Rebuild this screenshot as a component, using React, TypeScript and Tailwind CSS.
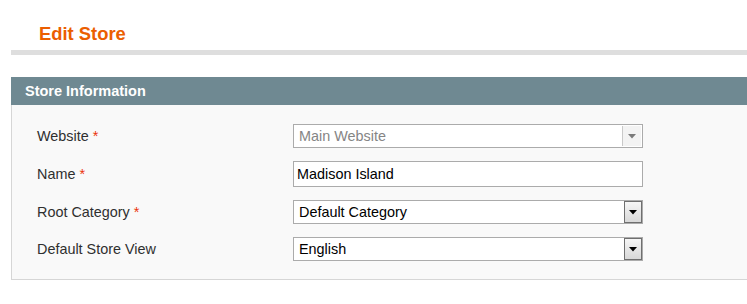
import React from "react";

const font = { fontFamily: '"Liberation Sans", Arial, sans-serif' };

function Arrow({ color }: { color: string }) {
  return (
    <svg width="8" height="5" viewBox="0 0 8 5" className="block">
      <polygon points="0,0 8,0 4,4.5" fill={color} />
    </svg>
  );
}

function Select({ value, disabled }: { value: string; disabled?: boolean }) {
  return (
    <div className="relative flex h-[24px] w-[350px] items-center border border-[#ababab] bg-white pl-[5px] pt-[2px]">
      <span className={disabled ? "text-[14.4px] text-[#858585]" : "text-[14.4px] text-black"}>{value}</span>
      {disabled ? (
        <div className="absolute right-[1px] top-[1px] flex h-[20px] w-[19px] items-center justify-center border-l border-[#c9c9c9] bg-[#f3f3f3]">
          <Arrow color="#7a7a7a" />
        </div>
      ) : (
        <div className="absolute right-[0px] top-[0px] flex h-[22px] w-[18px] items-center justify-center border border-[#6f6f6f] bg-gradient-to-b from-[#f6f6f6] to-[#d8d8d8]">
          <Arrow color="#000000" />
        </div>
      )}
    </div>
  );
}

function Label({ text, req }: { text: string; req?: boolean }) {
  return (
    <div className="w-[256px] pt-[2px] text-[14.4px] text-[#2f2f2f]">
      {text}
      {req && <span className="text-[#eb340a]"> *</span>}
    </div>
  );
}

export default function App() {
  return (
    <div className="h-[304px] w-[747px] overflow-hidden bg-white" style={font}>
      <div className="w-[760px] pl-[11px]">
        <h1 className="pl-[28px] pt-[23px] text-[18.4px] font-bold leading-[22px] text-[#eb5e00]">Edit Store</h1>
        <div className="mt-[5px] h-[5px] bg-[#dedede]" />
        <div className="mt-[22px]">
          <div className="flex h-[28px] items-center bg-[#6f8992] pl-[14px] pt-[2px] text-[14.5px] font-bold text-white">
            Store Information
          </div>
          <div className="border-x border-b border-[#d6d6d6] bg-[#f9f9f9] pb-[18px] pl-[25px] pt-[19px]">
            <div className="flex items-center">
              <Label text="Website" req />
              <Select value="Main Website" disabled />
            </div>
            <div className="mt-[13px] flex items-center">
              <Label text="Name" req />
              <div className="flex h-[26px] w-[350px] items-center border border-[#ababab] bg-white pl-[3px] pt-[2px] text-[14.4px] text-black">
                Madison Island
              </div>
            </div>
            <div className="mt-[13px] flex items-center">
              <Label text="Root Category" req />
              <Select value="Default Category" />
            </div>
            <div className="mt-[13px] flex items-center">
              <Label text="Default Store View" />
              <Select value="English" />
            </div>
          </div>
        </div>
      </div>
    </div>
  );
}
